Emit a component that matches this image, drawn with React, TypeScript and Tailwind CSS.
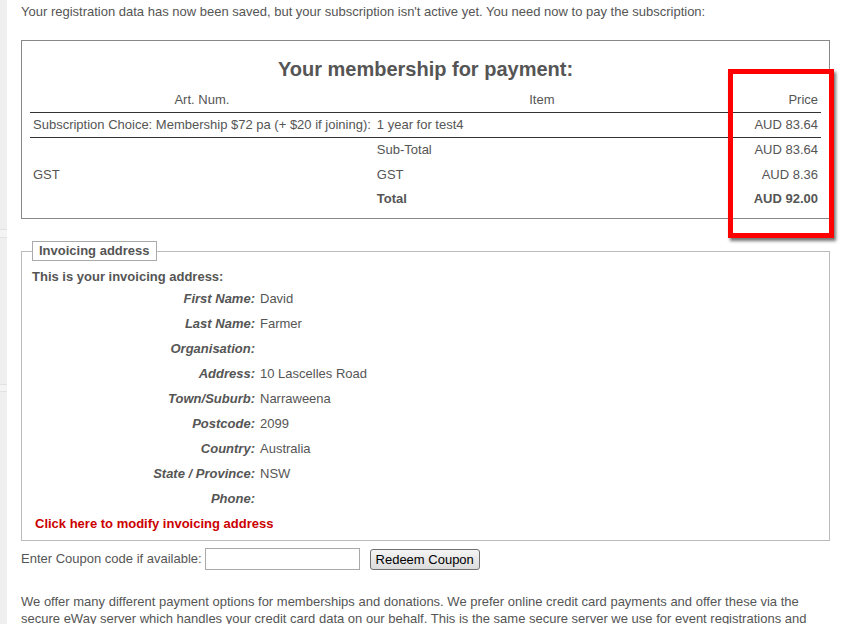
import React from "react";

const rows = [
  { label: "First Name:", value: "David" },
  { label: "Last Name:", value: "Farmer" },
  { label: "Organisation:", value: "" },
  { label: "Address:", value: "10 Lascelles Road" },
  { label: "Town/Suburb:", value: "Narraweena" },
  { label: "Postcode:", value: "2099" },
  { label: "Country:", value: "Australia" },
  { label: "State / Province:", value: "NSW" },
  { label: "Phone:", value: "" },
];

function SideStrip() {
  return (
    <div className="flex w-[7px] shrink-0 flex-col bg-[#efefef]">
      <div className="h-[229px]" />
      <div className="h-[9px] border-y border-[#e2e2e2] bg-[#f4f4f4]" />
      <div className="h-[146px]" />
      <div className="h-[8px] border-y border-[#e2e2e2] bg-[#f4f4f4]" />
    </div>
  );
}

function PaymentTable() {
  return (
    <div className="relative mt-[19px] border border-[#888] px-[8px] pb-[7px] pt-[16px]">
      <h2 className="mb-[7px] text-center text-[20px] font-bold leading-[24px] text-[#555]">
        Your membership for payment:
      </h2>
      <table className="w-full border-collapse text-[13px]">
        <colgroup>
          <col className="w-[342px]" />
          <col className="w-[336px]" />
          <col />
        </colgroup>
        <thead>
          <tr className="h-[24px] border-b border-[#333]">
            <th className="px-[3px] text-center font-normal">Art. Num.</th>
            <th className="px-[3px] text-center font-normal">Item</th>
            <th className="px-[3px] text-right font-normal">Price</th>
          </tr>
        </thead>
        <tbody>
          <tr className="h-[25px] border-b border-[#333]">
            <td className="whitespace-nowrap px-[3px]">
              Subscription Choice: Membership $72 pa (+ $20 if joining):
            </td>
            <td className="px-[3px]">1 year for test4</td>
            <td className="px-[3px] text-right">AUD 83.64</td>
          </tr>
          <tr className="h-[25px]">
            <td className="px-[3px]" />
            <td className="px-[3px]">Sub-Total</td>
            <td className="px-[3px] text-right">AUD 83.64</td>
          </tr>
          <tr className="h-[25px]">
            <td className="px-[3px]">GST</td>
            <td className="px-[3px]">GST</td>
            <td className="px-[3px] text-right">AUD 8.36</td>
          </tr>
          <tr className="h-[24px] font-bold">
            <td className="px-[3px]" />
            <td className="px-[3px]">Total</td>
            <td className="px-[3px] text-right">AUD 92.00</td>
          </tr>
        </tbody>
      </table>
      {/* highlight drawn over the price column */}
      <div className="absolute left-[706px] top-[28px] h-[169px] w-[106px] border-[5px] border-[#ff0000] shadow-[2px_3px_3px_rgba(0,0,0,0.55)]" />
    </div>
  );
}

function InvoicingAddress() {
  return (
    <fieldset className="mt-[22px] border border-[#bbb] px-[10px] pb-[4px]">
      <legend className="border border-[#aaa] px-[6px] text-[13px] font-bold leading-[18px] text-[#555]">
        Invoicing address
      </legend>
      <div className="mt-[7px] font-bold leading-[18px]">This is your invoicing address:</div>
      <div className="grid grid-cols-[223px_1fr] gap-x-[5px]">
        {rows.map((r) => (
          <React.Fragment key={r.label}>
            <div className="flex h-[25px] items-center justify-end font-bold italic">{r.label}</div>
            <div className="flex h-[25px] items-center">{r.value}</div>
          </React.Fragment>
        ))}
      </div>
      <div className="flex h-[25px] items-center pl-[3px] font-bold text-[#cc0000]">
        Click here to modify invoicing address
      </div>
    </fieldset>
  );
}

export default function App() {
  return (
    <div className="flex min-h-screen bg-white font-['Liberation_Sans',Arial,sans-serif] text-[13px] text-[#555]">
      <SideStrip />
      <div className="flex-1 pl-[14px] pr-[17px] pt-[3px]">
        <p className="leading-[18px]">
          Your registration data has now been saved, but your subscription isn't active yet. You need now
          to pay the subscription:
        </p>
        <PaymentTable />
        <InvoicingAddress />
        <div className="mt-[7px] flex items-center">
          <span>Enter Coupon code if available:</span>
          <input type="text" className="ml-[3px] h-[22px] w-[155px] border border-[#aaa] bg-white" />
          <button className="ml-[10px] h-[21px] w-[110px] rounded-[3px] border border-[#707070] bg-gradient-to-b from-[#f4f4f4] to-[#dcdcdc] text-[13px] text-black">
            Redeem Coupon
          </button>
        </div>
        <p className="mt-[23px] leading-[17px]">
          We offer many different payment options for memberships and donations. We prefer online credit
          card payments and offer these via the secure eWay server which handles your credit card data on
          our behalf. This is the same secure server we use for event registrations and
        </p>
      </div>
    </div>
  );
}
